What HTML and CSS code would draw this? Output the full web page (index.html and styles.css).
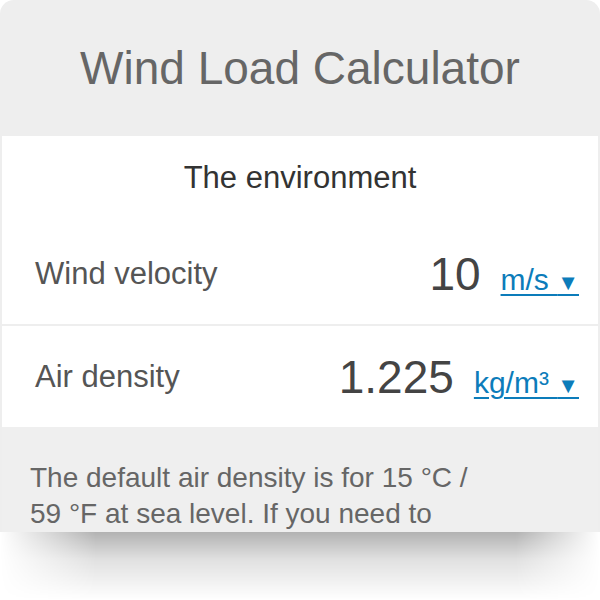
FILE: index.html
```html
<!DOCTYPE html>
<html lang="en">
<head>
  <meta charset="UTF-8">
  <title>Wind Load Calculator</title>
  <meta name="viewport" content="width=device-width, initial-scale=1" />
  <link rel="stylesheet" href="styles.css">
</head>
<body>

  <div class="calculator">
    <h1 class="calc-title">Wind Load Calculator</h1>

    <!-- inputs -->
    <div class="calc-body">
      <h2 class="section-title">The environment</h2>

      <div class="calc-row">
        <span class="label">Wind velocity</span>
        <span class="value-box">
          <span class="value">10</span>
          <span class="unit">m/s&nbsp;<span class="caret">▼</span></span>
        </span>
      </div>

      <div class="calc-row">
        <span class="label">Air density</span>
        <span class="value-box">
          <span class="value">1.225</span>
          <span class="unit">kg/m³&nbsp;<span class="caret">▼</span></span>
        </span>
      </div>
    </div>

    <!-- note under the inputs -->
    <p class="calc-note">The default air density is for 15 °C / 59 °F at sea level. If you need to calculate the wind load at a different altitude, change the value.</p>
  </div>
  <div class="calc-shadow"></div>

</body>
</html>
```

FILE: styles.css
```css
body {
  margin: 0;
  font-family: "Liberation Sans", Arial, sans-serif;
  background: #ffffff;
}

.calculator {
  width: 600px;
  height: 532px;
  box-sizing: border-box;
  padding: 0 2px;
  background: #eeeeee;
  border-radius: 14px 14px 0 0;
  overflow: hidden;
}

/* soft shadow under the card */
.calc-shadow {
  height: 68px;
  background: linear-gradient(to bottom, rgba(0, 0, 0, 0.3), rgba(0, 0, 0, 0.12) 40%, rgba(0, 0, 0, 0));
  -webkit-mask-image: linear-gradient(to right, transparent, #000 16%, #000 86%, transparent);
  mask-image: linear-gradient(to right, transparent, #000 16%, #000 86%, transparent);
}

.calc-title {
  margin: 0;
  height: 136px;
  display: flex;
  align-items: center;
  justify-content: center;
  font-size: 46px;
  font-weight: normal;
  color: #666;
}

.calc-body {
  background: #ffffff;
}

.section-title {
  margin: 0;
  padding: 24px 0 27px;
  text-align: center;
  font-size: 31px;
  font-weight: normal;
  color: #333;
}

.calc-row {
  height: 101px;
  display: flex;
  align-items: center;
  justify-content: space-between;
  padding: 0 16px 0 33px;
}

.calc-row + .calc-row {
  border-top: 2px solid #eeeeee;
}

.label {
  font-size: 31px;
  color: #555;
}

.value-box {
  display: flex;
  align-items: baseline;
  gap: 20px;
}

.value {
  font-size: 46px;
  color: #444;
}

.unit {
  font-size: 30px;
  color: #0c7cba;
  text-decoration: underline;
  text-decoration-thickness: 2px;
  text-underline-offset: 4px;
}

.caret {
  font-size: 22px;
  padding-right: 3px;
}

.calc-note {
  margin: 0;
  padding: 33px 108px 0 28px;
  font-size: 28px;
  line-height: 36px;
  color: #666;
  background: #efefef;
}
```
